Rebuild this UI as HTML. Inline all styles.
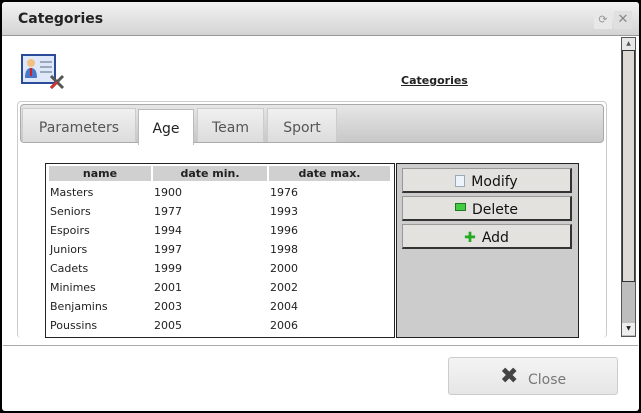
<!DOCTYPE html><html><head><style>
*{margin:0;padding:0;box-sizing:border-box}
body{width:641px;height:413px;background:#000;font-family:"DejaVu Sans","Liberation Sans",sans-serif;position:relative;overflow:hidden}
.win{position:absolute;left:2px;top:2px;width:637px;height:409px;background:#fff;border-radius:3px}
.title{position:absolute;left:0;top:0;width:637px;height:34px;background:linear-gradient(#f2f2f2,#d4d4d4);border-bottom:1px solid #999;border-radius:3px 3px 0 0}
.title span{position:absolute;left:16px;top:9px;font-weight:bold;font-size:14px;color:#222}
.a{position:absolute}
.tab{position:absolute;top:108px;height:34px;background:linear-gradient(#f0f0f0,#dcdcdc);font-size:14px;color:#555;text-align:center;line-height:38px;border:1px solid #ccc;border-bottom:none}
.cell{position:absolute;font-size:11px;color:#222}
.hd{position:absolute;top:166px;height:15px;background:#d0d0d0;font-size:11px;font-weight:bold;text-align:center;line-height:15px;color:#222}
.btn{position:absolute;left:402px;width:170px;height:25px;background:#e4e2de;border:1px solid #999;border-right:2px solid #333;border-bottom:2px solid #333;font-size:14px;text-align:center;line-height:26px;color:#111}
</style></head><body>
<div class="win">
<div class="title"><span>Categories</span>
<div class="a" style="left:592px;top:9px;width:18px;height:18px;background:#e8e8e8;color:#999;font-size:11px;text-align:center;line-height:18px">⟳</div>
<div class="a" style="left:612px;top:9px;width:18px;height:18px;background:#e0e0e0;color:#888;font-size:13px;font-weight:bold;text-align:center;line-height:18px">✕</div>
</div>
</div>
<svg class="a" style="left:21px;top:54px" width="46" height="38"><rect x="1" y="1" width="33" height="28" fill="#dfe8f8" stroke="#2a4a9a" stroke-width="2"/><circle cx="10" cy="9" r="4" fill="#f2c080"/><path d="M4 24 Q4 14 10 14 Q16 14 16 24Z" fill="#4a78c8"/><line x1="10" y1="14" x2="10" y2="22" stroke="#c22" stroke-width="2"/><g stroke="#9ab" stroke-width="2"><line x1="19" y1="8" x2="31" y2="8"/><line x1="19" y1="13" x2="31" y2="13"/><line x1="19" y1="18" x2="31" y2="18"/></g><path d="M30 22 L42 34 M42 22 L30 34" stroke="#555" stroke-width="3"/><path d="M30 34 L36 28" stroke="#c33" stroke-width="3"/></svg>
<div class="a" style="left:401px;top:74px;font-size:11px;font-weight:bold;text-decoration:underline;color:#222">Categories</div>
<div class="a" style="left:621px;top:37px;width:15px;height:300px;background:#bdbdbd;border:1px solid #555"></div>
<div class="a" style="left:622px;top:50px;width:13px;height:232px;background:#ddd9d4;border:1px solid #333"></div>
<div class="a" style="left:622px;top:38px;width:13px;height:12px;background:#e8e8e8;font-size:6px;text-align:center;line-height:12px;color:#555">▲</div>
<div class="a" style="left:622px;top:323px;width:13px;height:12px;background:#eee;font-size:6px;text-align:center;line-height:12px;color:#222">▼</div>
<div class="a" style="left:17px;top:101px;width:590px;height:237px;border:1px solid #ccc;border-radius:4px;border-bottom:none"></div>
<div class="a" style="left:20px;top:104px;width:584px;height:39px;background:linear-gradient(#e6e6e6,#c8c8c8);border:1px solid #aaa;border-radius:4px"></div>
<div class="tab" style="left:22px;width:114px">Parameters</div>
<div class="tab" style="left:138px;width:56px;top:109px;height:36px;background:#fff;color:#222;border-color:#bbb">Age</div>
<div class="tab" style="left:197px;width:67px">Team</div>
<div class="tab" style="left:267px;width:70px">Sport</div>
<div class="a" style="left:45px;top:163px;width:350px;height:175px;border:1px solid #222;background:#fff"></div>
<div class="hd" style="left:49px;width:102px">name</div>
<div class="hd" style="left:153px;width:114px">date min.</div>
<div class="hd" style="left:269px;width:121px">date max.</div>
<div class="a" style="left:396px;top:163px;width:183px;height:175px;background:#ccc;border:1px solid #222"></div>
<div class="btn" style="top:168px"><span style="display:inline-block;width:10px;height:12px;border:1px solid #9ab;background:#eef4fb;vertical-align:-1px;margin-right:6px"></span>Modify</div>
<div class="btn" style="top:196px"><span style="display:inline-block;width:11px;height:8px;border:1px solid #272;background:#4c4;vertical-align:3px;margin-right:6px"></span>Delete</div>
<div class="btn" style="top:224px"><span style="color:#2a2;font-weight:bold;margin-right:6px">✚</span>Add</div>
<div class="a" style="left:3px;top:345px;width:635px;height:1px;background:#aaa"></div>
<div class="a" style="left:448px;top:357px;width:170px;height:38px;border:1px solid #ccc;border-radius:3px;background:linear-gradient(#f4f4f4,#e6e6e6);font-size:14px;color:#777;line-height:44px;padding-left:79px">Close</div>
<div class="a" style="left:500px;top:364px;font-size:22px;font-weight:bold;color:#444">✖</div>
<div class="cell" style="left:50px;top:183px;line-height:19px">Masters<br>Seniors<br>Espoirs<br>Juniors<br>Cadets<br>Minimes<br>Benjamins<br>Poussins</div>
<div class="cell" style="left:154px;top:183px;line-height:19px">1900<br>1977<br>1994<br>1997<br>1999<br>2001<br>2003<br>2005</div>
<div class="cell" style="left:270px;top:183px;line-height:19px">1976<br>1993<br>1996<br>1998<br>2000<br>2002<br>2004<br>2006</div>
</body></html>
